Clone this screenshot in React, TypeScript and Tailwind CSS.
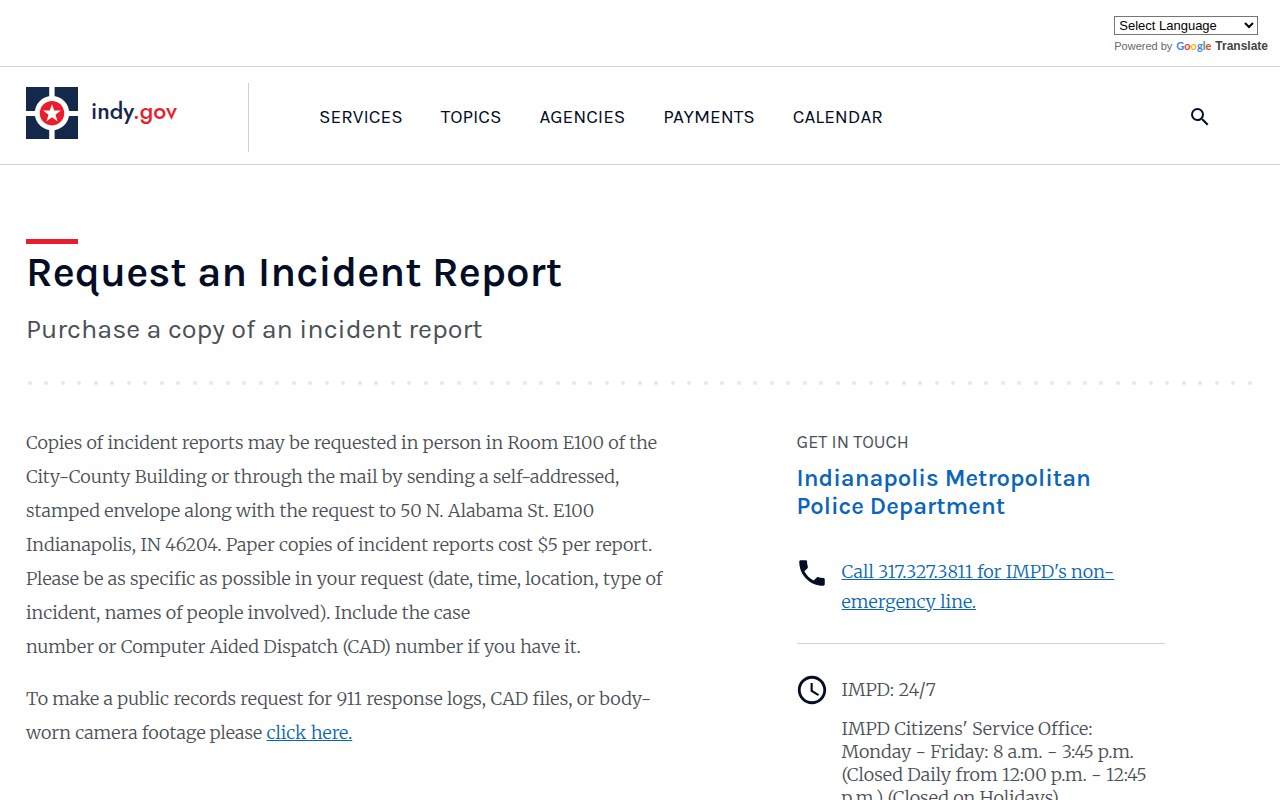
import React from "react";
import type { ReactNode } from "react";
import { MdAccessTime, MdPhone, MdSearch } from "react-icons/md";

const navItems = ["Services", "Topics", "Agencies", "Payments", "Calendar"];
const dots = Array.from({ length: 75 }, (_, i) => i);

function TranslateBar() {
  return (
    <div className="flex h-[67px] justify-end border-b border-[#d0d0d0] pr-3 font-['Liberation_Sans',sans-serif]">
      <div className="flex flex-col items-start pt-4">
        <select
          aria-label="Language Translate Widget"
          className="h-[19px] w-36 border border-[#767676] bg-white text-[13px] text-black"
        >
          <option>Select Language</option>
        </select>
        <p className="mt-1 flex items-center gap-1 text-[11px] leading-[14px] text-[#666]">
          <span>Powered by</span>
          <a href="#translate" className="flex items-center gap-1 text-xs leading-[14px] font-bold text-[#444]">
            <span className="font-['Lato',sans-serif] text-[11px] font-bold">
              <span className="text-[#4285f4]">G</span>
              <span className="text-[#ea4335]">o</span>
              <span className="text-[#fbbc05]">o</span>
              <span className="text-[#4285f4]">g</span>
              <span className="text-[#34a853]">l</span>
              <span className="text-[#ea4335]">e</span>
            </span>
            <span>Translate</span>
          </a>
        </p>
      </div>
    </div>
  );
}

function Logo() {
  return (
    <a href="#home" className="flex items-center gap-[13px]">
      <svg viewBox="0 0 52 52" className="size-[52px]" aria-hidden="true">
        <rect width="52" height="52" fill="#14284b" />
        <path d="M23.2 0h5.4v52h-5.4zM0 24h52v5H0z" fill="#fff" />
        <circle cx="26" cy="26.2" r="17.2" fill="#fff" />
        <circle cx="26" cy="26.2" r="12.2" fill="#ea1d2c" />
        <path
          d="M26 17.2l2.2 6.4h6.7l-5.4 4.1 2 6.6-5.5-4-5.5 4 2-6.6-5.4-4.1h6.7z"
          fill="#fff"
        />
      </svg>
      <span className="pb-1 font-['Jost','Josefin_Sans','Lato',sans-serif] text-[23px] leading-8 font-medium text-[#14284b]">
        indy<span className="text-[#ea1d2c]">.gov</span>
      </span>
    </a>
  );
}

function Header() {
  return (
    <header className="flex h-[98px] items-center border-b border-[#d0d0d0] px-[26px] pt-[3px]">
      <div className="flex h-[69px] w-[223px] items-start border-r border-[#d0d0d0] pt-1">
        <Logo />
      </div>
      <nav aria-label="Main" className="flex flex-1 items-center gap-[38px] pl-[70px]">
        {navItems.map((item) => (
          <a key={item} href={`#${item.toLowerCase()}`} className="text-[19px] leading-7 uppercase">
            {item}
          </a>
        ))}
      </nav>
      <button type="button" aria-label="Search" className="mr-[42px]">
        <MdSearch className="size-6" />
      </button>
    </header>
  );
}

function IconSlot({ children }: { children: ReactNode }) {
  return <span className="flex h-8 w-[30px] shrink-0 items-center justify-center text-[#030d25]">{children}</span>;
}

export default function App() {
  return (
    <div className="h-screen overflow-x-hidden overflow-y-auto bg-white font-['Karla','Roboto',sans-serif] text-[#030d25]">
      <TranslateBar />
      <Header />
      <main className="px-[26px] pt-[74px]">
        <div className="h-[5px] w-[52px] bg-[#ea1d2c]" />
        <h1 className="mt-[3px] text-[42px] leading-[50px] font-semibold">Request an Incident Report</h1>
        <p className="mt-4 text-[27px] leading-8 text-[#4a5056]">Purchase a copy of an incident report</p>
        <div aria-hidden="true" className="mt-9 flex justify-between px-0.5">
          {dots.map((i) => (
            <span key={i} className="size-1 rounded-full bg-[#e8e8e8]" />
          ))}
        </div>
        <div className="mt-[41px] flex items-start">
          <article className="w-[54%] font-['Merriweather','Liberation_Serif',serif] text-[18px] leading-[34px] font-light text-[#4a5056]">
            <p>
              Copies of incident reports may be requested in person in Room E100 of the
              <br />
              City-County Building or through the mail by sending a self-addressed,
              <br />
              stamped envelope along with the request to 50 N. Alabama St. E100
              <br />
              Indianapolis, IN 46204. Paper copies of incident reports cost $5 per report.
              <br />
              Please be as specific as possible in your request (date, time, location, type of
              <br />
              incident, names of people involved). Include the case
              <br />
              number or Computer Aided Dispatch (CAD) number if you have it.
            </p>
            <p className="mt-[18px]">
              To make a public records request for 911 response logs, CAD files, or body-
              <br />
              worn camera footage please{" "}
              <a href="#records" className="text-[#0a67b3] underline">
                click here.
              </a>
            </p>
          </article>
          <aside className="mr-[89px] ml-auto w-[30%]">
            <h2 className="mt-1 text-[18px] leading-6 text-[#4a5056] uppercase">Get in touch</h2>
            <a href="#impd" className="mt-2.5 block text-2xl leading-7 font-semibold text-[#0b65b8]">
              Indianapolis Metropolitan
              <br />
              Police Department
            </a>
            <div className="mt-[37px] flex gap-[15px] border-b border-[#d0d0d0] pb-[26px] font-['Merriweather','Liberation_Serif',serif] text-[18px] leading-[30px] font-light">
              <IconSlot>
                <MdPhone className="size-[34px] shrink-0" aria-hidden="true" />
              </IconSlot>
              <a href="tel:3173273811" className="text-[#0a67b3] underline">
                Call 317.327.3811 for IMPD's non-
                <br />
                emergency line.
              </a>
            </div>
            <div className="mt-[30px] flex gap-[15px] font-['Merriweather','Liberation_Serif',serif] text-[18px] leading-[23px] font-light text-[#4a5056]">
              <IconSlot>
                <MdAccessTime className="size-[34px] shrink-0" aria-hidden="true" />
              </IconSlot>
              <div>
                <p className="mt-1">IMPD: 24/7</p>
                <p className="mt-4">
                  IMPD Citizens' Service Office:
                  <br />
                  Monday - Friday: 8 a.m. - 3:45 p.m.
                  <br />
                  (Closed Daily from 12:00 p.m. - 12:45
                  <br />
                  p.m.) (Closed on Holidays)
                </p>
              </div>
            </div>
          </aside>
        </div>
      </main>
    </div>
  );
}
